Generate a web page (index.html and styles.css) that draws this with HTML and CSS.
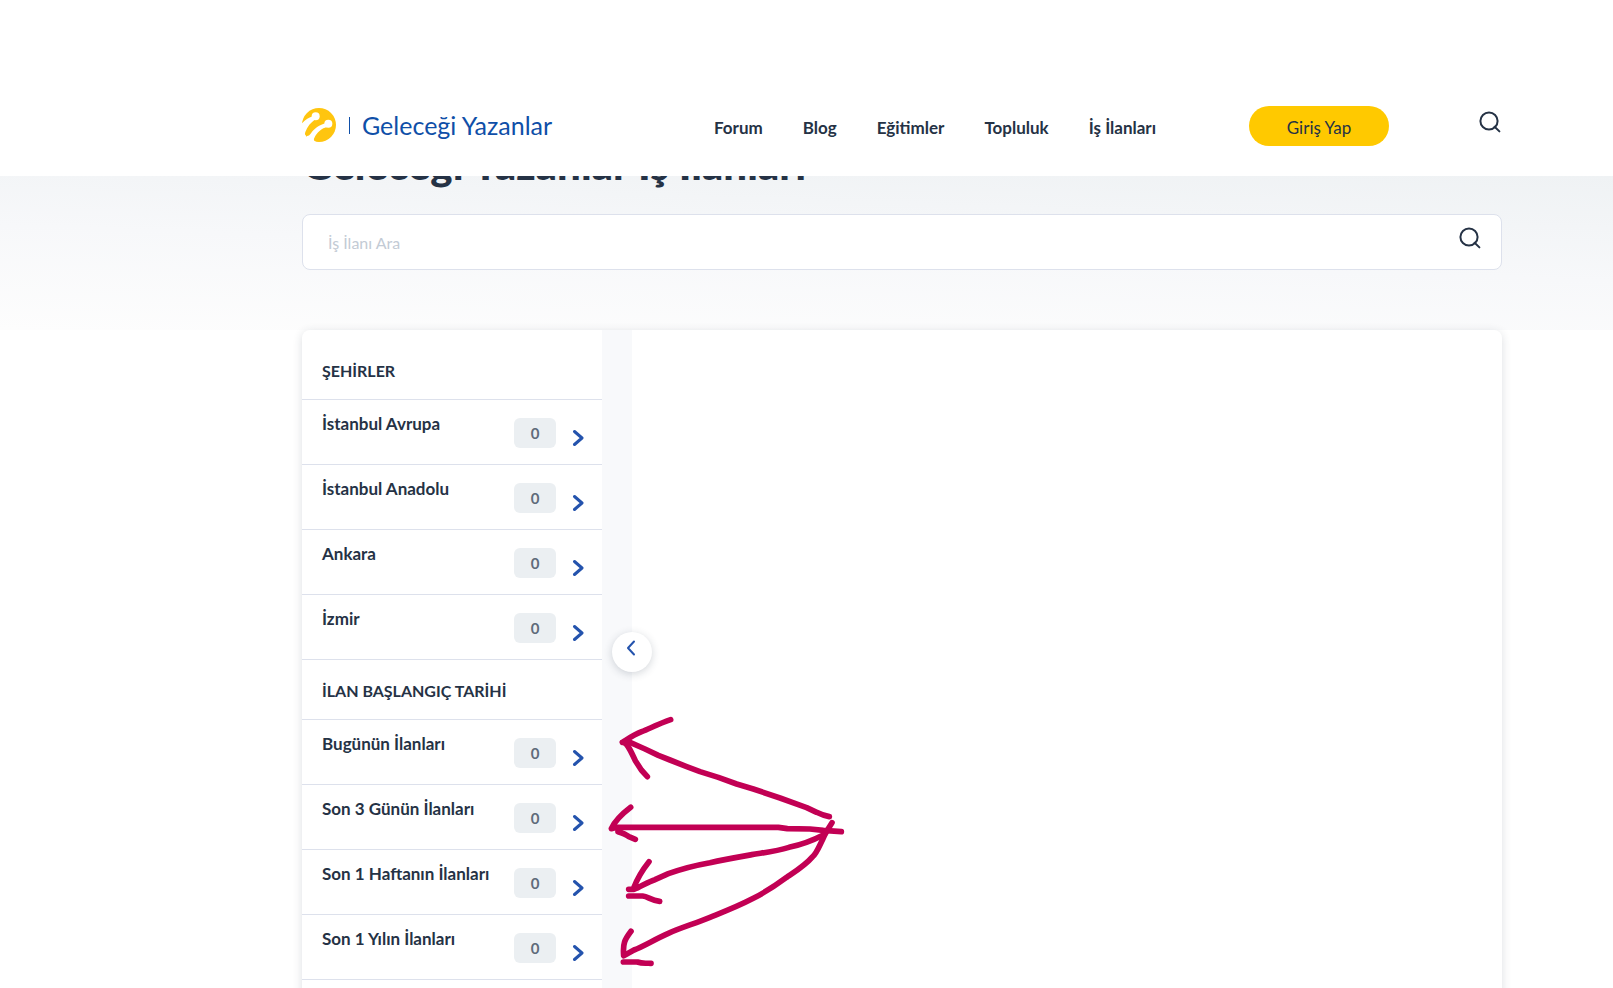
FILE: index.html
```html
<!DOCTYPE html>
<html lang="tr">
<head>
<meta charset="utf-8">
<title>Geleceği Yazanlar İş İlanları</title>
<link rel="stylesheet" href="styles.css">
</head>
<body>
<svg class="sprite" aria-hidden="true">
  <symbol id="search" viewBox="0 0 22 22"><circle cx="10" cy="10" r="8.6"/><path d="M15.6 15.8 20.4 20.4"/></symbol>
  <symbol id="right" viewBox="0 0 12 18"><path d="M2.500 2.500 10 9l-7.500 6.500"/></symbol>
  <symbol id="left" viewBox="0 0 10 16"><path d="M8 1.5 2 8l6 6.5"/></symbol>
</svg>
<header class="header wrap">
  <a class="logo" href="#">
    <svg class="logo-mark" viewBox="0 0 102 102" aria-hidden="true">
      <circle cx="51" cy="51" r="51" fill="#ffc50f"/>
      <g fill="#fff">
        <circle cx="41" cy="25" r="12"/>
        <circle cx="79" cy="47" r="12"/>
        <path d="M34 25C20 28 9 36-2 48L-8 90 12 90C8 84 8 78 10 72 16 56 26 44 40 34Z"/>
        <path d="M73 46C52 50 36 62 27 76 24 81 20 84 15 84L14 108 44 108 44 102C36 100 34 96 37 90 44 74 58 60 78 56Z"/>
      </g>
    </svg>
    <span class="logo-line"></span>
    <span class="logo-text">Geleceği Yazanlar</span>
  </a>
  <nav class="nav">
    <a href="#">Forum</a><a href="#">Blog</a><a href="#">Eğitimler</a><a href="#">Topluluk</a><a href="#">İş İlanları</a>
  </nav>
  <button class="login" type="button">Giriş Yap</button>
  <button class="icon-button header-search" type="button" aria-label="Ara"><svg class="search-icon"><use href="#search"/></svg></button>
</header>
<main>
  <section class="hero wrap">
    <h1>Geleceği Yazanlar İş İlanları</h1>
    <form class="search">
      <input type="text" placeholder="İş İlanı Ara" aria-label="İş İlanı Ara">
      <button class="icon-button" type="button" aria-label="İlan ara"><svg class="search-icon"><use href="#search"/></svg></button>
    </form>
  </section>
  <div class="wrap">
    <div class="card">
      <aside class="filters">
        <h2>ŞEHİRLER</h2>
        <ul>
          <li><a href="#"><span class="name">İstanbul Avrupa</span><span class="count">0</span><svg class="chevron"><use href="#right"/></svg></a></li>
          <li><a href="#"><span class="name">İstanbul Anadolu</span><span class="count">0</span><svg class="chevron"><use href="#right"/></svg></a></li>
          <li><a href="#"><span class="name">Ankara</span><span class="count">0</span><svg class="chevron"><use href="#right"/></svg></a></li>
          <li><a href="#"><span class="name">İzmir</span><span class="count">0</span><svg class="chevron"><use href="#right"/></svg></a></li>
        </ul>
        <h2>İLAN BAŞLANGIÇ TARİHİ</h2>
        <ul>
          <li><a href="#"><span class="name">Bugünün İlanları</span><span class="count">0</span><svg class="chevron"><use href="#right"/></svg></a></li>
          <li><a href="#"><span class="name">Son 3 Günün İlanları</span><span class="count">0</span><svg class="chevron"><use href="#right"/></svg></a></li>
          <li><a href="#"><span class="name">Son 1 Haftanın İlanları</span><span class="count">0</span><svg class="chevron"><use href="#right"/></svg></a></li>
          <li><a href="#"><span class="name">Son 1 Yılın İlanları</span><span class="count">0</span><svg class="chevron"><use href="#right"/></svg></a></li>
        </ul>
      </aside>
      <div class="divider"></div>
      <section class="results" aria-label="İlanlar"></section>
      <button class="toggle" type="button" aria-label="Filtreleri gizle"><svg><use href="#left"/></svg></button>
      <svg class="arrows" viewBox="0 0 810 864" aria-hidden="true">
        <path d="M718 350Q700 347 680 337L650 323 570 294 490 267 440 252 385 232 330 215 290 200 240 180 205 166 165 147 115 125"/>
        <path d="M242 59C205 72 180 85 155 95 130 105 115 116 97 127M97 127C112 125 125 160 136 182L154 210 172 230"/>
        <path d="M754 395 700 391 660 387 592 386 565 382 80 382 64 386C75 362 92 345 122 322M84 395Q105 401 115 409L136 418"/>
        <path d="M700 405C665 423 635 434 597 442 555 455 520 458 485 464 440 472 400 479 360 488 315 496 270 508 235 521L195 539C175 544 150 562 132 568L116 568M131 564C143 532 153 515 177 485M116 588H158C175 590 182 601 209 604"/>
        <path d="M726 368C715 385 705 401 699 416 687 440 680 460 668 470 646 496 620 512 590 532 555 558 525 577 490 595 440 621 405 634 360 652 315 671 280 680 235 700 190 720 165 737 132 750L101 767C98 730 104 719 123 694M100 786H142C158 792 165 789 183 790"/>
      </svg>
    </div>
  </div>
</main>
</body>
</html>
```
FILE: styles.css
```css
* { box-sizing: border-box; }
body {
  margin: 0;
  height: 100vh;
  overflow: hidden;
  background: #fff;
  color: #253245;
  font-family: Lato, "Open Sans", sans-serif;
  font-size: 17px;
  line-height: 20px;
}
a { color: inherit; text-decoration: none; }
button { font: inherit; color: inherit; border: 0; cursor: pointer; }
.sprite { position: absolute; width: 0; height: 0; }
.wrap { padding-left: 302px; padding-right: 111px; }
symbol { fill: none; stroke-linecap: round; stroke-linejoin: round; }

.header {
  position: relative;
  z-index: 2;
  display: flex;
  align-items: center;
  height: 176px;
  padding-top: 76px;
  background: #fff;
}
.logo { display: flex; align-items: center; width: 412px; padding-bottom: 2px; }
.logo-mark { width: 34px; height: 34px; }
.logo-line { width: 1px; height: 17px; margin: 0 12px 0 13px; background: #0f4fa8; }
.logo-text { color: #0f4fa8; font-size: 25px; line-height: 32px; }
.nav { display: flex; gap: 40px; padding-top: 4px; font-weight: 700; }
.login {
  width: 140px;
  height: 40px;
  margin-left: auto;
  padding: 4px 0 0;
  border-radius: 20px;
  background: #ffc900;
}
.icon-button { padding: 0; background: none; }
.header-search { margin: 0 1px 8px 90px; }
.search-icon { display: block; width: 22px; height: 22px; stroke: #253245; stroke-width: 2; }

.hero {
  display: flow-root;
  height: 154px;
  background: linear-gradient(182deg, #eff2f4, #f7f8fa 50%, #fdfdfd);
}
h1 { margin: -40px 0 22px; font-size: 42px; line-height: 56px; font-weight: 900; }
.search {
  display: flex;
  align-items: center;
  height: 56px;
  padding-right: 20px;
  border: 1px solid #dde1ec;
  border-radius: 8px;
  background: #fff;
}
.search input {
  flex: 1;
  height: 100%;
  padding: 0 25px;
  border: 0;
  outline: 0;
  background: none;
  font: inherit;
  font-size: 16px;
}
.search input::placeholder { color: #c3cbd5; opacity: 1; }
.search .icon-button { margin-bottom: 8px; }

.card {
  position: relative;
  display: flex;
  border-radius: 8px;
  background: #fff;
  box-shadow: 0 2px 10px rgba(37, 50, 69, .16);
}
.filters { width: 300px; padding: 10px 0 40px; font-weight: 700; }
h2 {
  margin: 0;
  padding: 21px 20px 18px;
  border-bottom: 1px solid #dde1ec;
  font-size: 16px;
  line-height: 20px;
}
ul { margin: 0; padding: 0; list-style: none; }
li { border-bottom: 1px solid #dde1ec; }
li a { display: flex; align-items: flex-start; height: 64px; padding: 14px 18px 0 20px; }
.name { flex: 1; }
.count {
  width: 42px;
  margin-top: 4px;
  border-radius: 6px;
  background: #ebeff2;
  color: #5f6b7a;
  font-size: 15px;
  line-height: 30px;
  text-align: center;
}
.chevron { width: 12px; height: 18px; margin: 15px 0 0 16px; stroke: #2453ad; stroke-width: 3; }
.divider { width: 30px; background: #f8f9fb; }
.results { flex: 1; }
.toggle {
  position: absolute;
  left: 310px;
  top: 302px;
  width: 40px;
  height: 40px;
  padding: 0 2px 8px 0;
  border-radius: 50%;
  background: #fff;
  box-shadow: 0 2px 8px rgba(37, 50, 69, .2);
}
.toggle svg { display: block; width: 10px; height: 16px; margin: 0 auto; stroke: #2453ad; stroke-width: 2; }
.arrows {
  position: absolute;
  left: 288px;
  top: 370px;
  width: 270px;
  height: 288px;
  fill: none;
  stroke: #c20054;
  stroke-width: 17;
  stroke-linecap: round;
  stroke-linejoin: round;
  pointer-events: none;
}
```
